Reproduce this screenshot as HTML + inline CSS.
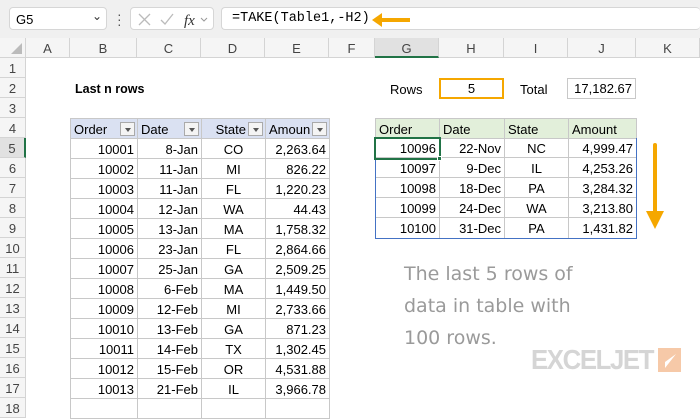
<!DOCTYPE html>
<html><head><meta charset="utf-8"><style>
*{box-sizing:border-box;margin:0;padding:0}
body{width:700px;height:400px;overflow:hidden;background:#fff;font-family:"Liberation Sans",Carlito,sans-serif;font-size:13px;color:#000;position:relative}
.a{position:absolute}
.top{left:0;top:0;width:700px;height:38px;background:#f0f0f0}
.box{background:#fff;border:1px solid #d6d6d6;border-radius:4px;height:23px;top:7px}
.ch{top:38px;height:20px;background:#f5f5f5;border-right:1px solid #d4d4d4;border-bottom:1px solid #d4d4d4;text-align:center;color:#444;line-height:21px;font-size:13px}
.rh{left:0;width:26px;height:20px;background:#f5f5f5;border-bottom:1px solid #d4d4d4;border-right:1px solid #d4d4d4;text-align:center;color:#444;line-height:21px}
.c{height:20px;line-height:21px;border-right:1px solid #c8c8c8;border-bottom:1px solid #c8c8c8;padding:0 3px;white-space:nowrap;overflow:hidden}
.r{text-align:right}.m{text-align:center}
.h1{background:#dae1f2}
.h2{background:#e2efda}
.dd{position:absolute;right:2px;top:3px;width:15px;height:14px;border:1px solid #aaa;background:#f4f4f4}
.dd:after{content:"";position:absolute;left:4px;top:5px;border-left:3px solid transparent;border-right:3px solid transparent;border-top:4px solid #555}
</style></head><body>
<div class="a top"></div>
<div class="a box" style="left:9px;width:98px"><span class="a" style="left:6px;top:4px;font-size:13px">G5</span><span class="a" style="left:82px;top:1px;font-size:12px;color:#333">&#8964;</span></div>
<div class="a" style="left:117px;top:12px;width:3px;height:14px;color:#555;font-size:14px;line-height:5px">·<br>·<br>·</div>
<div class="a box" style="left:130px;width:84px">
<svg class="a" style="left:0;top:0" width="84" height="23"><path d="M8 6l11 11M19 6L8 17" stroke="#bbb" stroke-width="1.3"/><path d="M30 12l4 4 8-10" stroke="#bbb" stroke-width="1.3" fill="none"/><text x="53" y="17" font-family="Liberation Serif" font-style="italic" font-size="15" fill="#333">fx</text><path d="M70 10l3 3 3-3" stroke="#999" fill="none"/></svg></div>
<div class="a box" style="left:221px;width:479px;border-right:none"><span class="a" style="left:10px;top:3px;font-family:'Liberation Mono',monospace;font-size:13.5px">=TAKE(Table1,-H2)</span>
<svg class="a" style="left:150px;top:4px" width="40" height="16"><path d="M8 8h30" stroke="#f5a700" stroke-width="4"/><path d="M0 8l10-7v14z" fill="#f5a700"/></svg></div>

<div class="a ch" style="left:0;width:26px"><svg width="26" height="20"><path d="M22 5v11H11z" fill="#bbb"/></svg></div>
<div class="a ch" style="left:26px;width:44px">A</div>
<div class="a ch" style="left:70px;width:67px">B</div>
<div class="a ch" style="left:137px;width:64px">C</div>
<div class="a ch" style="left:201px;width:64px">D</div>
<div class="a ch" style="left:265px;width:64px">E</div>
<div class="a ch" style="left:329px;width:46px">F</div>
<div class="a ch" style="left:375px;width:64px;background:#e1e1e1;border-bottom:2px solid #217346">G</div>
<div class="a ch" style="left:439px;width:65px">H</div>
<div class="a ch" style="left:504px;width:64px">I</div>
<div class="a ch" style="left:568px;width:68px">J</div>
<div class="a ch" style="left:636px;width:64px">K</div>

<div class="a rh" style="top:58px">1</div><div class="a rh" style="top:78px">2</div><div class="a rh" style="top:98px">3</div><div class="a rh" style="top:118px">4</div>
<div class="a rh" style="top:138px;background:#e1e1e1;border-right:2px solid #217346">5</div>
<div class="a rh" style="top:158px">6</div><div class="a rh" style="top:178px">7</div><div class="a rh" style="top:198px">8</div><div class="a rh" style="top:218px">9</div><div class="a rh" style="top:238px">10</div><div class="a rh" style="top:258px">11</div><div class="a rh" style="top:278px">12</div><div class="a rh" style="top:298px">13</div><div class="a rh" style="top:318px">14</div><div class="a rh" style="top:338px">15</div><div class="a rh" style="top:358px">16</div><div class="a rh" style="top:378px">17</div><div class="a rh" style="top:398px">18</div>

<div class="a" style="left:75px;top:82px;font-weight:bold;font-size:12.5px">Last n rows</div>
<div class="a" style="left:390px;top:82px">Rows</div>
<div class="a m" style="left:439px;top:78px;width:65px;height:21px;border:2px solid #f5a700;line-height:18px">5</div>
<div class="a" style="left:520px;top:82px">Total</div>
<div class="a r" style="left:567px;top:78px;width:69px;height:21px;border:1px solid #c8c8c8;line-height:20px;padding-right:3px">17,182.67</div>

<div class="a" style="left:70px;top:118px;border-left:1px solid #c8c8c8;border-top:1px solid #c8c8c8">
<div style="display:flex" class="h1"><div class="c" style="width:67px;position:relative">Order<span class="dd"></span></div><div class="c" style="width:64px;position:relative">Date<span class="dd"></span></div><div class="c r" style="width:64px;position:relative;padding-right:19px">State<span class="dd"></span></div><div class="c" style="width:64px;position:relative">Amoun<span class="dd"></span></div></div>
<div style="display:flex"><div class="c r" style="width:67px">10001</div><div class="c r" style="width:64px">8-Jan</div><div class="c m" style="width:64px">CO</div><div class="c r" style="width:64px">2,263.64</div></div>
<div style="display:flex"><div class="c r" style="width:67px">10002</div><div class="c r" style="width:64px">11-Jan</div><div class="c m" style="width:64px">MI</div><div class="c r" style="width:64px">826.22</div></div>
<div style="display:flex"><div class="c r" style="width:67px">10003</div><div class="c r" style="width:64px">11-Jan</div><div class="c m" style="width:64px">FL</div><div class="c r" style="width:64px">1,220.23</div></div>
<div style="display:flex"><div class="c r" style="width:67px">10004</div><div class="c r" style="width:64px">12-Jan</div><div class="c m" style="width:64px">WA</div><div class="c r" style="width:64px">44.43</div></div>
<div style="display:flex"><div class="c r" style="width:67px">10005</div><div class="c r" style="width:64px">13-Jan</div><div class="c m" style="width:64px">MA</div><div class="c r" style="width:64px">1,758.32</div></div>
<div style="display:flex"><div class="c r" style="width:67px">10006</div><div class="c r" style="width:64px">23-Jan</div><div class="c m" style="width:64px">FL</div><div class="c r" style="width:64px">2,864.66</div></div>
<div style="display:flex"><div class="c r" style="width:67px">10007</div><div class="c r" style="width:64px">25-Jan</div><div class="c m" style="width:64px">GA</div><div class="c r" style="width:64px">2,509.25</div></div>
<div style="display:flex"><div class="c r" style="width:67px">10008</div><div class="c r" style="width:64px">6-Feb</div><div class="c m" style="width:64px">MA</div><div class="c r" style="width:64px">1,449.50</div></div>
<div style="display:flex"><div class="c r" style="width:67px">10009</div><div class="c r" style="width:64px">12-Feb</div><div class="c m" style="width:64px">MI</div><div class="c r" style="width:64px">2,733.66</div></div>
<div style="display:flex"><div class="c r" style="width:67px">10010</div><div class="c r" style="width:64px">13-Feb</div><div class="c m" style="width:64px">GA</div><div class="c r" style="width:64px">871.23</div></div>
<div style="display:flex"><div class="c r" style="width:67px">10011</div><div class="c r" style="width:64px">14-Feb</div><div class="c m" style="width:64px">TX</div><div class="c r" style="width:64px">1,302.45</div></div>
<div style="display:flex"><div class="c r" style="width:67px">10012</div><div class="c r" style="width:64px">15-Feb</div><div class="c m" style="width:64px">OR</div><div class="c r" style="width:64px">4,531.88</div></div>
<div style="display:flex"><div class="c r" style="width:67px">10013</div><div class="c r" style="width:64px">21-Feb</div><div class="c m" style="width:64px">IL</div><div class="c r" style="width:64px">3,966.78</div></div>
<div style="display:flex"><div class="c r" style="width:67px"></div><div class="c r" style="width:64px"></div><div class="c m" style="width:64px"></div><div class="c r" style="width:64px"></div></div>
</div>

<div class="a" style="left:375px;top:118px;border-left:1px solid #c8c8c8;border-top:1px solid #c8c8c8">
<div style="display:flex" class="h2"><div class="c" style="width:64px">Order</div><div class="c" style="width:65px">Date</div><div class="c" style="width:64px">State</div><div class="c" style="width:68px">Amount</div></div>
</div>
<div class="a" style="left:375px;top:138px;width:262px;height:101px;border:1.5px solid #4472c4;border-top:none"></div>
<div class="a" style="left:376px;top:138px">
<div style="display:flex"><div class="c r" style="width:64px">10096</div><div class="c r" style="width:65px">22-Nov</div><div class="c m" style="width:64px">NC</div><div class="c r" style="width:67px;border-right:none">4,999.47</div></div>
<div style="display:flex"><div class="c r" style="width:64px">10097</div><div class="c r" style="width:65px">9-Dec</div><div class="c m" style="width:64px">IL</div><div class="c r" style="width:67px;border-right:none">4,253.26</div></div>
<div style="display:flex"><div class="c r" style="width:64px">10098</div><div class="c r" style="width:65px">18-Dec</div><div class="c m" style="width:64px">PA</div><div class="c r" style="width:67px;border-right:none">3,284.32</div></div>
<div style="display:flex"><div class="c r" style="width:64px">10099</div><div class="c r" style="width:65px">24-Dec</div><div class="c m" style="width:64px">WA</div><div class="c r" style="width:67px;border-right:none">3,213.80</div></div>
<div style="display:flex"><div class="c r" style="width:64px;border-bottom:none">10100</div><div class="c r" style="width:65px;border-bottom:none">31-Dec</div><div class="c m" style="width:64px;border-bottom:none">PA</div><div class="c r" style="width:67px;border:none">1,431.82</div></div>
</div>
<div class="a" style="left:374px;top:137px;width:67px;height:23px;border:2px solid #217346"></div>
<div class="a" style="left:437px;top:156px;width:5px;height:5px;background:#217346;border:1px solid #fff"></div>

<svg class="a" style="left:645px;top:143px" width="20" height="90"><path d="M10 2v68" stroke="#f5a700" stroke-width="4" stroke-linecap="round"/><path d="M1 68h18l-9 18z" fill="#f5a700"/></svg>

<div class="a" style="left:404px;top:258px;color:#9a9a9a;font-family:'DejaVu Sans',sans-serif;font-size:19px;line-height:32px;letter-spacing:0px">The last 5 rows of<br>data in table with<br>100 rows.</div>

<div class="a" style="left:531px;top:344px;color:#d5d5d5;font-weight:bold;font-size:28px;letter-spacing:-1.5px;font-family:'Liberation Sans',sans-serif;transform:scaleX(0.92);transform-origin:left">EXCELJET</div>
<svg class="a" style="left:658px;top:348px" width="23" height="24"><rect width="23" height="24" fill="#f6c9a8"/><path d="M7 20l11-14-11 8z" fill="#fff"/></svg>
</body></html>
